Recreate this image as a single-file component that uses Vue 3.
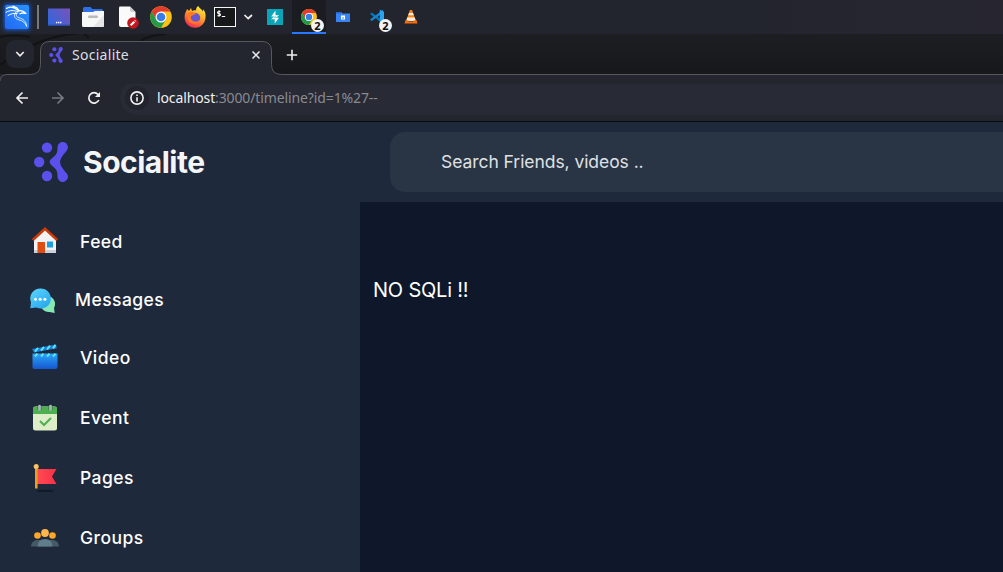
<script setup>
const menu = [
  { id: 'feed', label: 'Feed' },
  { id: 'messages', label: 'Messages' },
  { id: 'video', label: 'Video' },
  { id: 'event', label: 'Event' },
  { id: 'pages', label: 'Pages' },
  { id: 'groups', label: 'Groups' },
]
</script>

<template>
  <div class="desktop">
    <header class="taskbar">
      <div class="slot">
        <svg width="34" height="34" viewBox="0 0 34 34">
          <defs>
            <linearGradient id="kali" x1="0" y1="1" x2="1" y2="0"><stop offset="0" stop-color="#2368f5" /><stop offset="1" stop-color="#2794ff" /></linearGradient>
            <filter id="glow" x="-30%" y="-30%" width="160%" height="160%"><feGaussianBlur stdDeviation="2" /></filter>
          </defs>
          <rect x="4" y="4" width="26" height="26" rx="2" fill="#1769ff" opacity=".8" filter="url(#glow)" />
          <rect x="5" y="5" width="24" height="24" rx="2" fill="url(#kali)" />
          <g fill="none" stroke="#fff" stroke-linecap="round" stroke-linejoin="round">
            <path d="M6.500 8.500C11 5.800 15 7.300 18.500 10.800" stroke-width="1.100" />
            <path d="M6 12.300c4-2.400 8-2 12-.6M8 15.500c3-2 6-2.300 9-2" stroke-width="1" />
            <path d="M13 6.200c3 .8 5 2.500 6.300 4.600 2.200-.4 4.700.5 6.600 2.700-2-.7-4.300-.6-6 .3" stroke-width="1.300" />
            <path d="M18.500 11c-3 2.500-3.300 5.500.5 6.800 4.200 1.200 6.700 2.800 7.800 8.700-1.800-4-4-5.800-7.800-6.600-4.800-1-6-5-3-7.900" stroke-width=".8" />
          </g>
        </svg>
      </div>
      <div class="divider"><i></i></div>
      <div class="slot">
        <svg width="34" height="34" viewBox="0 0 34 34">
          <defs><linearGradient id="desk" x1="0" y1=".7" x2="1" y2=".1"><stop offset="0" stop-color="#3566da" /><stop offset="1" stop-color="#7653bc" /></linearGradient></defs>
          <rect x="6" y="8.500" width="22" height="17" fill="url(#desk)" /><path d="M6 25h22" stroke="#2b51b4" />
          <path d="M14 22.500h6" stroke="#fff" stroke-width="1.400" stroke-dasharray="1.400 .6" />
        </svg>
      </div>
      <div class="slot">
        <svg width="34" height="34" viewBox="0 0 34 34">
          <path d="M7 14V8.500q0-1.500 1.500-1.500h6l2 2h9q1.500 0 1.500 1.500V14z" fill="#3070e6" />
          <path d="M6 12h11l2-1h9v14.500q0 1.500-1.500 1.500h-19Q6 27 6 25.500z" fill="#f7f7f8" /><path d="M28 15v10.500q0 1.500-1.500 1.500H17z" fill="#e5e5e7" />
          <rect x="12" y="15.500" width="10" height="2.400" rx="1.200" fill="#b8b9bd" />
        </svg>
      </div>
      <div class="slot">
        <svg width="34" height="34" viewBox="0 0 34 34">
          <path d="M9.500 6.500H20l5.500 5.500v13q0 2-2 2h-12.500q-2 0-2-2v-17z" fill="#fafafa" /><path d="M20 6.500v3.500q0 2 2 2h3.500z" fill="#cbcbcf" />
          <circle cx="23" cy="23" r="5.800" fill="#c6161d" /><path d="m20.700 25.300 3.600-3.600M25 21l.5-.5" stroke="#fff" stroke-width="2.200" />
        </svg>
      </div>
      <div class="slot">
        <svg width="34" height="34" viewBox="0 0 34 34">
          <g id="chrome">
            <circle cx="17" cy="17" r="10.800" fill="#fbc116" />
            <path d="M7.650 11.600A10.800 10.800 0 0 1 26.350 11.600H17L12.320 19.700z" fill="#e33b2e" />
            <path d="M7.650 11.600A10.800 10.800 0 0 0 17 27.800l4.680-8.100h-9.360z" fill="#229a48" />
            <circle cx="17" cy="17" r="5.500" fill="#fff" /><circle cx="17" cy="17" r="4.300" fill="#397de8" />
          </g>
        </svg>
      </div>
      <div class="slot">
        <svg width="34" height="34" viewBox="0 0 34 34">
          <defs><linearGradient id="fox" x1=".8" y1="0" x2=".25" y2="1"><stop offset="0" stop-color="#fff345" /><stop offset=".4" stop-color="#ffac27" /><stop offset=".7" stop-color="#ff633b" /><stop offset="1" stop-color="#ed245d" /></linearGradient></defs>
          <path d="M8 11.500 9 9l2 2 2-3 1 3c1-.6 2-.8 4-.7 0-2.300 1-3.500 2.200-4.300 1 2.500 3.800 3 4.800 5.600l.3-2.300c1.700 2 2.500 4.700 2.300 7.700-.5 6.500-4.600 10.700-10.500 10.700-6 0-10.500-4.600-10.500-10.500 0-2 .5-4.300 1.400-5.700z" fill="url(#fox)" />
          <circle cx="17.500" cy="17.700" r="4.700" fill="#6656d1" /><path d="M10.500 12.500c3-1.500 5.500-.5 7.500 1.700-2.400.1-3.700 1.800-5.800 1.800 0 4.800 5.600 7.600 9.500 4-2 5.500-10.900 4.700-12.300-1.500z" fill="#ff7a22" />
        </svg>
      </div>
      <div class="slot term">
        <svg width="28" height="34" viewBox="0 0 28 34">
          <rect x="2.500" y="7.500" width="21" height="19" fill="#17181a" stroke="#f5f5f5" />
          <path d="M8.500 11.500H6.700Q5.500 11.500 5.500 12.500t1.500 1.100Q8.500 13.700 8.500 14.700T7 15.700H5.300M7 10.300v6.500M9.800 16.500h3.400" stroke="#fff" fill="none" stroke-width="1.100" />
        </svg>
      </div>
      <div class="slot more"><svg width="18" height="34" viewBox="0 0 18 34"><path d="m4.500 15 3.700 3.500 3.800-3.500" fill="none" stroke="#eee" stroke-width="1.700" /></svg></div>
      <div class="slot">
        <svg width="34" height="34" viewBox="0 0 34 34"><rect x="9" y="9" width="16" height="16" fill="#08a5b8" /><path d="M17.500 10.500v4.700h3.700L17.700 18v-1.500h-4.500zM16.700 23.500v-4.300H13l3.500-3v1.500H21z" fill="#fff" /></svg>
      </div>
      <div class="slot active">
        <svg width="34" height="34" viewBox="0 0 34 34"><use href="#chrome" transform="translate(4.400 4.400) scale(.74)" /></svg>
        <span class="badge">2</span>
      </div>
      <div class="slot">
        <svg width="34" height="34" viewBox="0 0 34 34"><path d="M10 12h5l1.500 1.500H24V22H10z" fill="#3984f5" /><path d="M10 13.500h5l1-1.500h-6z" fill="#2563ce" /><rect x="15" y="15.500" width="4" height="4" fill="#fff" /><path d="M16 18h2" stroke="#3984f5" /></svg>
      </div>
      <div class="slot">
        <svg width="34" height="34" viewBox="0 0 34 34"><path d="m10 14 1.700-1.600 11.300 8.300V24z" fill="#0877b9" /><path d="m10 19.500 1.700 1.600L23 13V9.700z" fill="#1687ce" /><path d="m19.800 9.800 4.200 2v10.500l-4.200 2z" fill="#2aa4ed" /></svg>
        <span class="badge">2</span>
      </div>
      <div class="slot">
        <svg width="34" height="34" viewBox="0 0 34 34"><path d="M16 10h2l4 11H12z" fill="#ff8612" /><path d="m15 13-.8 2.300h5.600L19 13zM13.300 17.500l-.8 2.500q4.500 2 9 0l-.8-2.500z" fill="#f4eee8" /><path d="m11.500 20-1 3.500h13l-1-3.500q-5.500 3-11 0z" fill="#f66d0a" /></svg>
      </div>
    </header>

    <section class="chrome-tabs">
      <svg class="tab-frame" width="1003" height="50" viewBox="0 0 1003 50">
        <g fill="none" stroke="#121316" stroke-width="2"><path d="M0 3q17-3 30 0M0 31Q12 22 31 12T78-1M84 0l5 4M140 7q10-6 26-7" /></g>
        <path d="M0 50v-3q0-6.500 8-6.500h22q10.500 0 10.500-10V17q0-9.500 9.500-9.500h212q9.500 0 9.500 9.500v13.500q0 10 10 10H1003V50z" fill="#23252f" />
        <path d="M0 47q0-6.500 8-6.500h22q10.500 0 10.500-10V17q0-9.500 9.500-9.500h212q9.500 0 9.500 9.500v13.500q0 10 10 10H1003" fill="none" stroke="#55585d" />
      </svg>
      <div class="tab-search"><svg width="28" height="28"><path d="m10.300 12 3.700 3.800 3.700-3.800" fill="none" stroke="#eee" stroke-width="1.700" /></svg></div>
      <div class="tab">
        <svg class="favicon" width="14" height="16" viewBox="0 0 34 40"><use href="#mark" /></svg>
        <span>Socialite</span>
        <svg class="close" width="10" height="10"><path d="m1.500 1.500 7 7m0-7-7 7" stroke="#eee" stroke-width="1.500" /></svg>
      </div>
      <svg class="plus" width="12" height="12"><path d="M6 .8v10.400M.8 6h10.400" stroke="#eee" stroke-width="1.600" /></svg>
    </section>

    <nav class="toolbar">
      <svg class="back" width="14" height="14" viewBox="0 0 14 14"><path d="M13 7H2m5.500-5.500L2 7l5.500 5.500" fill="none" stroke="#f1f1f2" stroke-width="1.700" /></svg>
      <svg class="forward" width="14" height="14" viewBox="0 0 14 14"><path d="M1 7h11M6.500 1.500 12 7l-5.500 5.500" fill="none" stroke="#777980" stroke-width="1.700" /></svg>
      <svg class="reload" width="14" height="14" viewBox="0 0 14 14"><path d="M11.800 9A5.200 5.200 0 1 1 11 3.500l1.500 1.500" fill="none" stroke="#f1f1f2" stroke-width="1.700" /><path d="M13 1v5H8z" fill="#f1f1f2" /></svg>
      <div class="address">
        <span class="info"><svg width="14" height="14"><circle cx="7" cy="7" r="6.100" fill="none" stroke="#f1f1f2" stroke-width="1.600" /><path d="M7 6.200v4.300M7 3.500v1.600" stroke="#f1f1f2" stroke-width="1.600" /></svg></span>
        <span class="url"><b>localhost</b>:3000/timeline?id=1%27--</span>
      </div>
    </nav>

    <main class="app">
      <aside class="sidebar">
        <div class="brand">
          <svg width="34" height="40" viewBox="0 0 34 40">
            <g id="mark" fill="#5c50ec">
              <circle cx="5.200" cy="20" r="5.200" /><circle cx="13" cy="5.600" r="5.200" /><circle cx="13" cy="34" r="5.200" />
              <path d="M23.500 5.200a5.200 5.200 0 1 1 9.300 3.200c-3.100 4-6.700 7.600-6.700 11.600s3.600 7.700 6.700 11.600a5.200 5.200 0 1 1-9.300 3.200c.2-7-1.800-8-6-11.600q-3.800-3.200 0-6.400c4.200-3.600 6.200-4.600 6-11.600z" />
            </g>
          </svg>
          <span>Socialite</span>
        </div>
        <ul class="menu">
          <li v-for="item in menu" :key="item.id" :class="item.id">
            <svg width="30" height="30" viewBox="0 0 30 30">
              <g v-if="item.id === 'feed'">
                <path d="M4 13 15 3l11 10v14H4z" fill="#f3f3f6" /><path d="M4 24h22v3H4z" fill="#cbd1d8" />
                <rect x="7.500" y="16" width="7.500" height="11" fill="#e14c10" /><rect x="17" y="15.500" width="6" height="6" fill="#1a9fe1" />
                <path d="M2.800 14 15 2.800 27.200 14" fill="none" stroke="#cc3a0a" stroke-width="2.600" />
              </g>
              <g v-else-if="item.id === 'messages'">
                <defs><linearGradient id="msg" x1="0" y1="0" x2=".8" y2="1"><stop stop-color="#5bd6ff" /><stop offset="1" stop-color="#28a6ed" /></linearGradient></defs>
                <path d="M20 11a8 8 0 0 1 6.500 12l.7 5-5.200-1A8 8 0 1 1 20 11z" fill="#86e8b4" />
                <path d="M13 3.500a10 10 0 1 1-4 19l-6.200.8.700-6A10 10 0 0 1 13 3.500z" fill="url(#msg)" />
                <g fill="#fff"><circle cx="8" cy="14.300" r="1.500" /><circle cx="12.700" cy="14.300" r="1.500" /><circle cx="17.400" cy="14.300" r="1.500" /></g>
              </g>
              <g v-else-if="item.id === 'video'">
                <defs><linearGradient id="clap" x1="0" y1="0" x2="0" y2="1"><stop stop-color="#2ba5f5" /><stop offset="1" stop-color="#1558d2" /></linearGradient></defs>
                <path d="M2.500 11.500h25V25q0 2-2 2h-21q-2 0-2-2z" fill="url(#clap)" /><path d="m2 7 24-4.500.8 3.800L4 10.500z" fill="#1683dc" />
                <path d="m5 9.700 3-3.800M11 8.600l3-3.800M17 7.500l3-3.800M23 6.400l2.500-3.500M5 14.500l2.500-2.700M11 14.500l2.500-2.700M17 14.500l2.500-2.700M23 14.500l2.500-2.700" stroke="#5ce5ff" stroke-width="2" />
              </g>
              <g v-else-if="item.id === 'event'">
                <rect x="3" y="4.500" width="24" height="24" rx="2.500" fill="#dcedc8" /><path d="M3 12V7q0-2.500 2.500-2.500h19Q27 4.500 27 7v5z" fill="#4caf50" />
                <path d="M9.500 4.500v3.500M20.500 4.500v3.500" stroke="#388e3c" stroke-width="5" /><path d="M9.500 4v3.500M20.500 4v3.500" stroke="#a9b5bd" stroke-width="2.700" stroke-linecap="round" />
                <path d="m10 19 4 4 7-7" fill="none" stroke="#4caf50" stroke-width="2" />
              </g>
              <g v-else-if="item.id === 'pages'">
                <ellipse cx="15" cy="29" rx="8.500" ry="1.300" fill="#111a28" />
                <defs><linearGradient id="flag"><stop stop-color="#ff4c52" /><stop offset="1" stop-color="#f82f48" /></linearGradient></defs>
                <path d="M7 7h19.500L22 14.500l4.500 7.500H7z" fill="url(#flag)" /><path d="M6.300 5v21.500" stroke="#e8a01d" stroke-width="2.600" /><circle cx="6.200" cy="4.500" r="2.500" fill="#f7c465" />
              </g>
              <g v-else>
                <path d="M1 24.500Q1.500 18 7.500 18h15q6 0 6.500 6.500z" fill="#455a64" /><g fill="#ffa726"><circle cx="7.500" cy="13.500" r="3.300" /><circle cx="22.500" cy="13.500" r="3.300" /></g>
                <circle cx="15" cy="11" r="3.900" fill="#ffb74d" /><path d="M7.500 24.500Q7.800 17 15 17t7.500 7.500z" fill="#607d8b" />
              </g>
            </svg>
            <span>{{ item.label }}</span>
          </li>
        </ul>
      </aside>
      <div class="right">
        <div class="top"><div class="search"><span>Search Friends, videos ..</span></div></div>
        <div class="content"><p>NO SQLi !!</p></div>
      </div>
    </main>
  </div>
</template>

<style>
body { margin: 0; overflow: hidden; }
</style>

<style scoped>
.desktop { width: 1003px; height: 572px; display: flex; flex-direction: column; overflow: hidden; background: #1e293b; }
svg { display: block; flex: none; }
.taskbar { height: 34px; flex: none; display: flex; background: linear-gradient(90deg, #22252d, #23252e 75%, #272630); }
.slot { width: 34px; height: 34px; position: relative; }
.term { width: 28px; }
.more { width: 18px; }
.divider { width: 8px; display: flex; align-items: center; justify-content: center; }
.divider i { width: 2px; height: 24px; background: #77787d; }
.active { background: #1a1c22; box-shadow: inset 0 -2px #2777ff; }
.badge { position: absolute; left: 19px; top: 18.500px; width: 13px; height: 13px; border-radius: 50%; background: #f4f4f4; color: #111; font: 700 11px/13px "Noto Sans", sans-serif; text-align: center; }
.chrome-tabs { height: 40px; flex: none; display: flex; position: relative; z-index: 1; align-items: center; background: linear-gradient(#1c1e22, #17181b); }
.tab-frame { position: absolute; left: 0; top: 0; z-index: 0; }
.tab-search { position: relative; width: 28px; height: 28px; margin-left: 6px; border-radius: 9px; background: #23252f; }
.tab { position: relative; width: 215px; margin-left: 15px; display: flex; align-items: center; height: 28px; padding-top: 2px; margin-top: 0; font: 14px/28px "Noto Sans", sans-serif; letter-spacing: .28px; color: #dedfe1; }
.tab span { margin-left: 9px; }
.close { margin-left: auto; margin-right: 3px; }
.plus { position: relative; margin-left: 22px; margin-top: 2px; }
.toolbar { height: 47px; flex: none; display: flex; align-items: center; border-bottom: 1px solid #090a0c; background: #23252f; }
.back { margin-left: 15px; }
.forward { margin-left: 22px; }
.reload { margin-left: 22px; }
.address { margin-left: 19px; width: 883px; height: 34px; display: flex; align-items: center; border-radius: 17px 0 0 17px; background: #282a35; }
.info { width: 24px; height: 24px; margin-left: 5px; display: grid; place-items: center; border-radius: 50%; background: #22242d; }
.url { margin-left: 8px; font: 14px/20px "Noto Sans", sans-serif; letter-spacing: -.12px; color: #898b91; white-space: nowrap; }
.url b { font-weight: 400; color: #f1f1f2; }
.app { flex: 1; display: flex; font-family: Inter, sans-serif; color: #fff; background: #1e293b; }
.sidebar { width: 360px; flex: none; }
.brand { height: 80px; padding-left: 34px; display: flex; align-items: center; gap: 15px; }
.brand span { font-size: 30px; font-weight: 700; letter-spacing: -.5px; color: #f4f5f7; }
.menu { margin: 0; padding: 10px 0 0 30px; list-style: none; }
.menu li { height: 60px; display: flex; align-items: center; font-size: 17.500px; font-weight: 500; letter-spacing: .45px; }
.menu svg { margin-top: -2px; }
.menu li span { margin-left: 20px; margin-top: -2px; }
.menu .messages { height: 56px; }
.menu .messages svg { margin-left: -3px; width: 31px; margin-top: 0; }
.menu .messages span { margin-left: 17px; }
.right { flex: 1; display: flex; flex-direction: column; }
.top { height: 80px; box-sizing: border-box; padding: 10px 0 10px 30px; }
.search { height: 60px; box-sizing: border-box; border-radius: 15px 0 0 15px; background: #293445; display: flex; align-items: center; padding: 0 0 2px 51px; font-size: 17.500px; letter-spacing: -.06px; color: #dfe1e4; }
.content { flex: 1; background: #0f172a; }
.content p { margin: 73px 0 0 13px; font-size: 20px; line-height: 30px; letter-spacing: -.2px; }
</style>
